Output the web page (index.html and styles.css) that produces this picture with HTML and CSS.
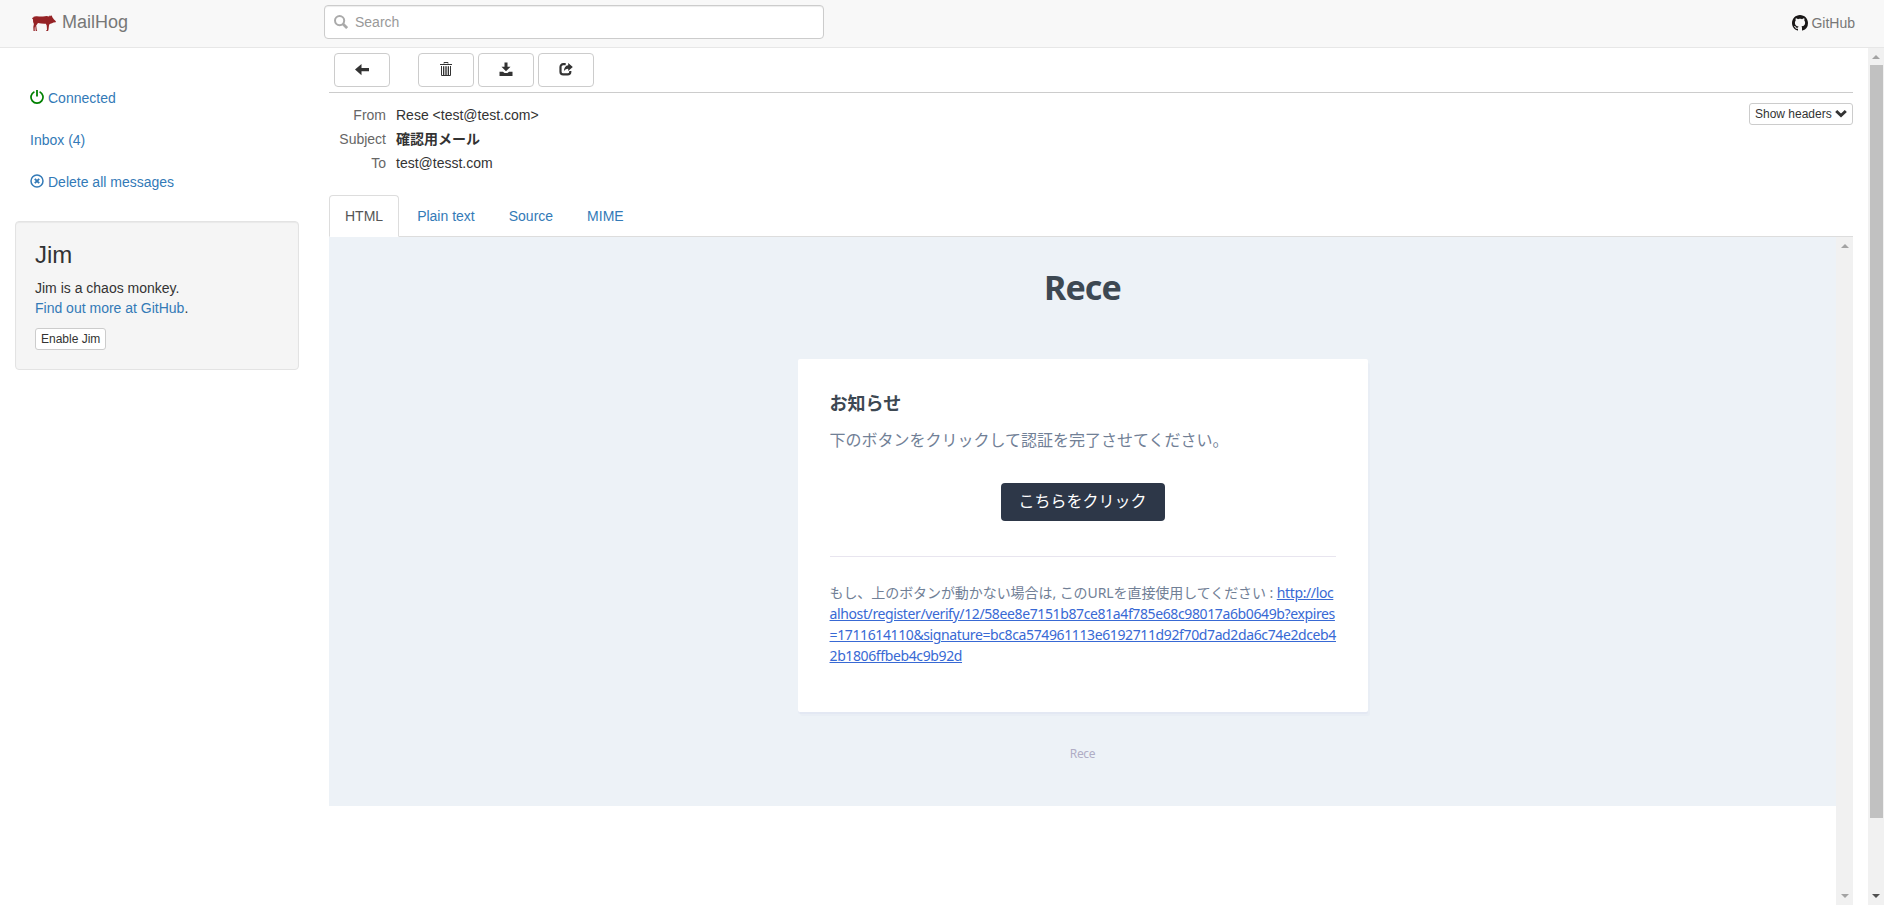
FILE: index.html
```html
<!DOCTYPE html>
<html lang="ja">
<head>
<meta charset="utf-8">
<title>MailHog</title>
<link rel="stylesheet" href="styles.css">
</head>
<body>
<header class="navbar">
  <a class="brand">
    <svg class="pig" viewBox="0 0 24 16"><path d="M.4 2.600 1 3 1.600 1.800Q3 .9 5 1.200Q9 1.900 13 1.200Q15.500 .9 17 1.600L18 .2 18.800 1.200 19.900.2 20.200 2 22 4.600 23.900 6.200 23.700 7.200 21.500 7.600 20 8.200 17.600 9 17 10.400 16.400 15.200 15.800 15.900H13.900L15 14.800 14.700 10.600 13.800 8.800Q9.500 9 6 8L4.200 10.400 4.800 14.900 5.200 15.900H3.700L3.300 11.300 2.700 12.700 2.700 15 2.900 15.900H1.500L1.300 12 1.900 9 1.100 7 1 4.200.2 4Z"/></svg>
    <span>MailHog</span>
  </a>
  <div class="search">
    <svg class="icon" viewBox="0 0 14 14"><circle cx="5.600" cy="5.600" r="4.600" fill="none" stroke="currentColor" stroke-width="2"/><path d="M8.800 8.800l4.300 4.300" stroke="currentColor" stroke-width="2.700"/></svg>
    <span>Search</span>
  </div>
  <a class="github">
    <svg class="octocat" viewBox="0 0 16 16"><path d="M8 0C3.580 0 0 3.580 0 8c0 3.540 2.290 6.530 5.470 7.590.4.070.55-.17.55-.38 0-.19-.01-.82-.01-1.490-2.010.37-2.530-.49-2.690-.94-.09-.23-.48-.94-.82-1.130-.28-.15-.68-.52-.01-.53.63-.01 1.080.58 1.230.82.72 1.210 1.870.87 2.330.66.070-.52.28-.87.51-1.070-1.780-.2-3.640-.89-3.640-3.950 0-.87.31-1.590.82-2.150-.08-.2-.36-1.020.08-2.120 0 0 .67-.21 2.200.82.64-.18 1.320-.27 2-.27s1.360.09 2 .27c1.530-1.040 2.200-.82 2.200-.82.44 1.100.16 1.920.08 2.120.51.56.82 1.270.82 2.150 0 3.070-1.870 3.750-3.650 3.950.29.25.54.73.54 1.480 0 1.070-.01 1.930-.01 2.200 0 .21.15.46.55.38A8.010 8.010 0 0 0 16 8c0-4.420-3.580-8-8-8z"/></svg>
    <span>GitHub</span>
  </a>
</header>
<div class="layout">
  <aside class="sidebar">
    <nav class="side-nav">
      <a><svg class="icon power" viewBox="0 0 14 14"><path d="M4.400 1.700A6 6 0 1 0 9.600 1.700" fill="none" stroke="currentColor" stroke-width="1.700"/><path d="M7 0v6.500" stroke="currentColor" stroke-width="1.800"/></svg><span>Connected</span></a>
      <a><span>Inbox (4)</span></a>
      <a><svg class="icon" viewBox="0 0 14 14"><circle cx="7" cy="7" r="6" fill="none" stroke="currentColor" stroke-width="1.500"/><path d="M4.800 4.800l4.400 4.400M9.200 4.800L4.800 9.200" stroke="currentColor" stroke-width="1.900"/></svg><span>Delete all messages</span></a>
    </nav>
    <section class="well">
      <h3>Jim</h3>
      <p>Jim is a chaos monkey.<br><a>Find out more at GitHub</a>.</p>
      <button class="btn-xs">Enable Jim</button>
    </section>
  </aside>
  <main class="message">
    <div class="toolbar">
      <button class="btn back"><svg class="icon" viewBox="0 0 14 14"><path d="M0 7.500l6.500-5.500V6H14v3.200H6.500v4z" fill="currentColor"/></svg></button>
      <button class="btn"><svg class="icon" viewBox="0 0 14 14"><path d="M5 1.500V.5h4v1M1 2.500h12" fill="none" stroke="currentColor" stroke-width="1"/><path d="M2.500 4v9.500h9V4M4.500 4.200v9M6.200 4.200v9M7.800 4.200v9M9.500 4.200v9" fill="none" stroke="currentColor" stroke-width="1"/></svg></button>
      <button class="btn"><svg class="icon" viewBox="0 0 14 14"><path d="M5.500.5h3v4.200h3L7 9.300 2.500 4.700h3zM.5 9.800h3.400l1.700 1.200h2.800l1.700-1.200h3.400V14H.5z" fill="currentColor"/></svg></button>
      <button class="btn"><svg class="icon" viewBox="0 0 14 14"><path d="M6.700 2.200H4.200A2.700 2.700 0 0 0 1.500 4.900v4.800a2.700 2.700 0 0 0 2.700 2.700h4.400a2.700 2.700 0 0 0 2.700-2.700V9" fill="none" stroke="currentColor" stroke-width="2.200"/><path d="M9.200 1l4.600 4-4.600 4V6.700C7 6.700 5.700 7.700 4.900 9.400 4.900 5.900 6.400 3.500 9.200 3.200z" fill="currentColor"/></svg></button>
    </div>
    <div class="headers">
      <dl>
        <dt>From</dt><dd>Rese &lt;test@test.com&gt;</dd>
        <dt>Subject</dt><dd class="subject">確認用メール</dd>
        <dt>To</dt><dd>test@tesst.com</dd>
      </dl>
      <button class="btn-xs toggle">Show headers <svg viewBox="0 0 12 12"><path d="M1.200 3l4.800 4.500L10.800 3" fill="none" stroke="currentColor" stroke-width="3"/></svg></button>
    </div>
    <nav class="tabs"><a class="active">HTML</a><a>Plain text</a><a>Source</a><a>MIME</a></nav>
    <div class="preview">
      <div class="page">
        <article class="mail">
          <h1>Rece</h1>
          <div class="card">
            <h2>お知らせ</h2>
            <p>下のボタンをクリックして認証を完了させてください。</p>
            <a class="action">こちらをクリック</a>
            <div class="sub"><span class="ja">もし、上のボタンが動かない場合は, このURLを直接使用してください : </span><a>http://loc<br>alhost/register/verify/12/58ee8e7151b87ce81a4f785e68c98017a6b0649b?expires<br>=1711614110&amp;signature=bc8ca574961113e6192711d92f70d7ad2da6c74e2dceb4<br>2b1806ffbeb4c9b92d</a></div>
          </div>
          <footer>Rece</footer>
        </article>
      </div>
      <div class="scrollbar inner"><i class="up"></i><i class="down"></i></div>
    </div>
  </main>
  <div class="scrollbar outer"><i class="up"></i><b class="thumb"></b><i class="down dark"></i></div>
</div>
</body>
</html>
```
FILE: styles.css
```css
* { box-sizing: border-box; }
body { margin: 0; height: 905px; display: flex; flex-direction: column; overflow: hidden; background: #fff; color: #333; font: 14px/20px "Liberation Sans", "Noto Sans CJK JP", sans-serif; }
svg { display: block; flex: none; }
a { color: #337ab7; }
h1, h2, h3, p, dl, dd { margin: 0; }
button { font-family: inherit; color: #333; background: #fff; border: 1px solid #ccc; }
.icon { width: 14px; height: 14px; }

.navbar { flex: none; height: 48px; display: flex; background: #f8f8f8; border-bottom: 1px solid #e7e7e7; }
.brand { width: 324px; height: 44px; padding-left: 32px; display: flex; align-items: center; gap: 6px; font-size: 18px; color: #777; }
.pig { width: 24px; height: 16px; margin-top: 2px; fill: #952225; }
.search { width: 500px; height: 34px; margin-top: 5px; padding-left: 9px; display: flex; align-items: center; gap: 7px; border: 1px solid #ccc; border-radius: 4px; background: #fff; box-shadow: inset 0 1px 1px rgba(0,0,0,.075); color: #999; }
.search .icon { color: #aaa; }
.github { height: 45px; margin-left: auto; padding-right: 29px; display: flex; align-items: center; gap: 3px; color: #777; }
.octocat { width: 16px; height: 16px; fill: #191717; margin-top: 1px; }

.layout { flex: 1; min-height: 0; display: flex; }
.sidebar { width: 329px; flex: none; padding: 30px 30px 0 15px; }
.side-nav { display: flex; flex-direction: column; gap: 2px; padding-bottom: 19px; }
.side-nav a { display: flex; gap: 4px; padding: 10px 15px; }
.side-nav .icon { margin-top: 2px; }
.side-nav .power { color: #008000; }
.well { height: 149px; padding: 20px 19px; border: 1px solid #e3e3e3; border-radius: 4px; background: #f5f5f5; box-shadow: inset 0 1px 1px rgba(0,0,0,.05); }
.well h3 { font-weight: 400; font-size: 24px; line-height: 26px; margin-bottom: 10px; }
.well p { margin-bottom: 10px; }
.btn-xs { display: inline-flex; align-items: center; height: 22px; padding: 0 5px; border-radius: 3px; font-size: 12px; line-height: 18px; }

.message { flex: 1; min-width: 0; margin-right: 15px; display: flex; flex-direction: column; }
.toolbar { height: 45px; padding: 5px 5px 0; display: flex; gap: 4px; border-bottom: 1px solid #ccc; }
.btn { width: 56px; height: 34px; padding: 0 0 2px; display: flex; justify-content: center; align-items: center; border-radius: 4px; }
.back { margin-right: 24px; }
.headers { height: 102px; padding-top: 10px; display: flex; justify-content: space-between; align-items: flex-start; }
dl { display: grid; grid-template-columns: 57px auto; column-gap: 10px; line-height: 24px; }
dt { text-align: right; color: #666; }
.subject { font-weight: 700; }
.toggle { width: 104px; gap: 3px; white-space: nowrap; }
.toggle svg { width: 12px; height: 12px; }
.tabs { flex: none; height: 42px; display: flex; gap: 2px; border-bottom: 1px solid #ddd; }
.tabs a { height: 42px; padding: 10px 15px; border: 1px solid transparent; }
.tabs .active { color: #555; background: #fff; border-color: #ddd #ddd #fff; border-radius: 4px 4px 0 0; }

.preview { flex: 1; min-height: 0; display: flex; }
.page { flex: 1; }
.mail { height: 569px; background: #edf2f7; display: flex; flex-direction: column; align-items: center; font-family: "Noto Sans", "Noto Sans CJK JP", sans-serif; }
.mail h1 { padding: 27px 0 48px; font-size: 34px; letter-spacing: -.9px; line-height: 47px; color: #3d4852; }
.card { width: 570px; height: 353px; padding: 31px 32px 32px; display: flex; flex-direction: column; background: #fff; border-radius: 2px; box-shadow: 0 2px 0 rgba(0,0,150,.025), 2px 4px 0 rgba(0,0,150,.015); }
.card h2 { font-size: 18px; line-height: 26px; color: #3d4852; }
.card p { margin-top: 12px; font-size: 16px; line-height: 24px; color: #718096; white-space: nowrap; }
.action { align-self: center; width: 164px; height: 38px; margin: 31px 0 35px; border-radius: 4px; background: #2d3748; color: #fff; font-size: 16px; line-height: 36px; text-align: center; }
.sub { border-top: 1px solid #e8e5ef; padding-top: 25px; font-size: 14px; line-height: 21px; color: #718096; white-space: nowrap; }
.ja { letter-spacing: -.07px; }
.sub a { color: #3869d4; text-decoration: underline; letter-spacing: -.38px; }
footer { margin-top: 32px; font-size: 12px; letter-spacing: -.3px; line-height: 20px; color: #b0adc5; }

.scrollbar { flex: none; display: flex; flex-direction: column; align-items: center; justify-content: space-between; background: #f1f1f1; padding: 7px 0; }
.inner { width: 17px; }
.outer { width: 16px; }
.scrollbar i { width: 0; height: 0; border: 4px solid transparent; }
.scrollbar .up { border-top: 0; border-bottom-color: #a3a3a3; }
.scrollbar .down { border-bottom: 0; border-top-color: #a3a3a3; }
.scrollbar .dark { border-top-color: #505050; }
.thumb { width: 13px; height: 753px; margin: 6px 0 auto; background: #c1c1c1; }
```
